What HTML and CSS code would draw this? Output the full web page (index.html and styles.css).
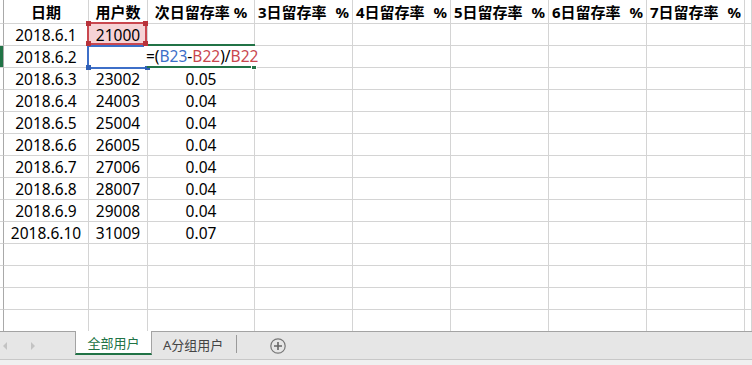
FILE: index.html
```
<!DOCTYPE html>
<html lang="zh-CN">
<head>
    <meta charset="UTF-8">
    <title>留存率</title>
    <link rel="stylesheet" href="styles.css">
</head>
<body>

    <div class="sheet">
        <!-- 表头 -->
        <div class="c stub"></div><div class="c hd">日期</div><div class="c hd">用户数</div><div class="c hd">次日留存率 %</div>
        <div class="c hd sp"><span>3日留存率</span><span>%</span></div>
        <div class="c hd sp"><span>4日留存率</span><span>%</span></div>
        <div class="c hd sp"><span>5日留存率</span><span>%</span></div>
        <div class="c hd sp"><span>6日留存率</span><span>%</span></div>
        <div class="c hd sp"><span>7日留存率</span><span>%</span></div>
        <div class="c"></div>

        <!-- 第22行：被引用的单元格 -->
        <div class="c stub"></div><div class="c">2018.6.1</div>
        <div class="c ref"><span class="ref-red"><i class="h tl"></i><i class="h tr"></i><i class="h bl"></i><i class="h br"></i></span><span class="val">21000</span></div>
        <div class="c"></div><div class="c"></div><div class="c"></div><div class="c"></div><div class="c"></div><div class="c"></div><div class="c"></div>

        <!-- 第23行：正在编辑公式 -->
        <div class="c stub sel"></div><div class="c">2018.6.2</div>
        <div class="c ref"><span class="ref-blue"><i class="h bl"></i><i class="h br"></i></span></div>
        <div class="c ref"><span class="active-box"><i class="fill"></i></span><span class="editor">=(<b class="blue">B23</b>-<b class="red">B22</b>)/<b class="red">B22</b></span></div>
        <div class="c"></div><div class="c"></div><div class="c"></div><div class="c"></div><div class="c"></div><div class="c"></div>

        <div class="c stub"></div><div class="c">2018.6.3</div><div class="c">23002</div><div class="c">0.05</div><div class="c"></div><div class="c"></div><div class="c"></div><div class="c"></div><div class="c"></div><div class="c"></div>
        <div class="c stub"></div><div class="c">2018.6.4</div><div class="c">24003</div><div class="c">0.04</div><div class="c"></div><div class="c"></div><div class="c"></div><div class="c"></div><div class="c"></div><div class="c"></div>
        <div class="c stub"></div><div class="c">2018.6.5</div><div class="c">25004</div><div class="c">0.04</div><div class="c"></div><div class="c"></div><div class="c"></div><div class="c"></div><div class="c"></div><div class="c"></div>
        <div class="c stub"></div><div class="c">2018.6.6</div><div class="c">26005</div><div class="c">0.04</div><div class="c"></div><div class="c"></div><div class="c"></div><div class="c"></div><div class="c"></div><div class="c"></div>
        <div class="c stub"></div><div class="c">2018.6.7</div><div class="c">27006</div><div class="c">0.04</div><div class="c"></div><div class="c"></div><div class="c"></div><div class="c"></div><div class="c"></div><div class="c"></div>
        <div class="c stub"></div><div class="c">2018.6.8</div><div class="c">28007</div><div class="c">0.04</div><div class="c"></div><div class="c"></div><div class="c"></div><div class="c"></div><div class="c"></div><div class="c"></div>
        <div class="c stub"></div><div class="c">2018.6.9</div><div class="c">29008</div><div class="c">0.04</div><div class="c"></div><div class="c"></div><div class="c"></div><div class="c"></div><div class="c"></div><div class="c"></div>
        <div class="c stub"></div><div class="c">2018.6.10</div><div class="c">31009</div><div class="c">0.07</div><div class="c"></div><div class="c"></div><div class="c"></div><div class="c"></div><div class="c"></div><div class="c"></div>

        <!-- 空行 -->
        <div class="c stub"></div><div class="c"></div><div class="c"></div><div class="c"></div><div class="c"></div><div class="c"></div><div class="c"></div><div class="c"></div><div class="c"></div><div class="c"></div>
        <div class="c stub"></div><div class="c"></div><div class="c"></div><div class="c"></div><div class="c"></div><div class="c"></div><div class="c"></div><div class="c"></div><div class="c"></div><div class="c"></div>
        <div class="c stub"></div><div class="c"></div><div class="c"></div><div class="c"></div><div class="c"></div><div class="c"></div><div class="c"></div><div class="c"></div><div class="c"></div><div class="c"></div>
        <div class="c stub"></div><div class="c"></div><div class="c"></div><div class="c"></div><div class="c"></div><div class="c"></div><div class="c"></div><div class="c"></div><div class="c"></div><div class="c"></div>
    </div>

    <div class="tabbar">
        <div class="nav"><span class="tri left"></span><span class="tri right"></span></div>
        <div class="tab active">全部用户</div>
        <div class="tab">A分组用户</div>
        <div class="sep"></div>
        <div class="add">
            <svg width="16" height="16" viewBox="0 0 16 16">
                <circle cx="8" cy="8" r="7.2" fill="none" stroke="#777" stroke-width="1.2"/>
                <path d="M8 4v8M4 8h8" stroke="#666" stroke-width="1.6"/>
            </svg>
        </div>
    </div>
    <div class="status"></div>

</body>
</html>
```

FILE: styles.css
```
body {
    margin: 0;
    width: 752px;
    height: 365px;
    overflow: hidden;
    background-color: #ffffff;
    font-family: 'Noto Sans', 'Noto Sans CJK SC', sans-serif;
    color: #000;
}

.sheet {
    display: grid;
    grid-template-columns: 4px 85px 59px 107px repeat(5, 98px) 1fr;
    grid-template-rows: 24px;
    grid-auto-rows: 22px;
    height: 331px;
    overflow: hidden;
}

.c {
    box-sizing: border-box;
    border-right: 1px solid #d4d4d4;
    border-bottom: 1px solid #d4d4d4;
    display: flex;
    align-items: center;
    justify-content: center;
    font-size: 15.5px;
    white-space: nowrap;
    position: relative;
}

.stub {
    border-right-color: #a9a9a9;
}

.stub.sel {
    box-shadow: inset -3px 0 #217346;
}

.hd {
    font-weight: bold;
    font-size: 15px;
}

.hd.sp {
    justify-content: space-between;
    padding: 0 3px 0 3px;
}

/* 公式引用框 */
.ref-red {
    position: absolute;
    left: -2px;
    top: -2px;
    width: 60px;
    height: 23px;
    box-sizing: border-box;
    border: 2px solid #c9474f;
    background-color: #f6d3d6;
    z-index: 3;
}

.val {
    position: relative;
    z-index: 4;
}

.ref-blue {
    position: absolute;
    left: -2px;
    top: -1px;
    width: 62px;
    height: 24px;
    box-sizing: border-box;
    border: 2px solid #3d6fc8;
    z-index: 2;
}

.h {
    position: absolute;
    width: 5px;
    height: 5px;
}

.ref-red .h { background-color: #b8323a; }
.ref-blue .h { background-color: #2f5fb5; }

.h.tl { left: -3px; top: -3px; }
.h.tr { right: -3px; top: -3px; }
.h.bl { left: -3px; bottom: -3px; }
.h.br { right: -3px; bottom: -3px; }

.active-box {
    position: absolute;
    left: -1px;
    top: -2px;
    width: 108px;
    height: 24px;
    box-sizing: border-box;
    border: 2px solid #217346;
    z-index: 2;
}

.fill {
    position: absolute;
    right: -4px;
    bottom: -4px;
    width: 4px;
    height: 4px;
    background-color: #217346;
    border: 1px solid #fff;
}

.editor {
    position: absolute;
    left: -4px;
    top: 0;
    height: 20px;
    padding: 0 4px 0 2px;
    display: flex;
    align-items: center;
    background-color: #fff;
    z-index: 5;
}

.editor b {
    font-weight: normal;
}

.blue { color: #3d6fc8; }
.red { color: #c9474f; }

/* 工作表标签栏 */
.tabbar {
    display: flex;
    align-items: flex-start;
    height: 27px;
    background-color: #e6e6e6;
    border-top: 1px solid #a3a3a3;
    border-bottom: 1px solid #c8c8c8;
    font-size: 13px;
}

.nav {
    width: 75px;
    height: 27px;
    display: flex;
    align-items: center;
    padding-left: 3px;
    box-sizing: border-box;
}

.tri {
    width: 0;
    height: 0;
    border-top: 4px solid transparent;
    border-bottom: 4px solid transparent;
}

.tri.left {
    border-right: 4px solid #c3c3c3;
}

.tri.right {
    border-left: 4px solid #c3c3c3;
    margin-left: 24px;
}

.tab {
    height: 22px;
    display: flex;
    align-items: center;
    padding: 0 13px 0 11px;
    color: #444;
    margin-top: 1px;
}

.tab.active {
    width: 77px;
    box-sizing: border-box;
    justify-content: center;
    padding: 0;
    margin-top: -1px;
    height: 24px;
    background-color: #fff;
    color: #217346;
    border-left: 1px solid #a3a3a3;
    border-right: 1px solid #a3a3a3;
    border-bottom: 2px solid #217346;
}

.sep {
    width: 1px;
    height: 18px;
    margin-top: 3px;
    background-color: #9a9a9a;
}

.add {
    margin: 6px 0 0 33px;
    width: 16px;
    height: 16px;
}

.status {
    height: 5px;
    background-color: #f0f0f0;
}
```
